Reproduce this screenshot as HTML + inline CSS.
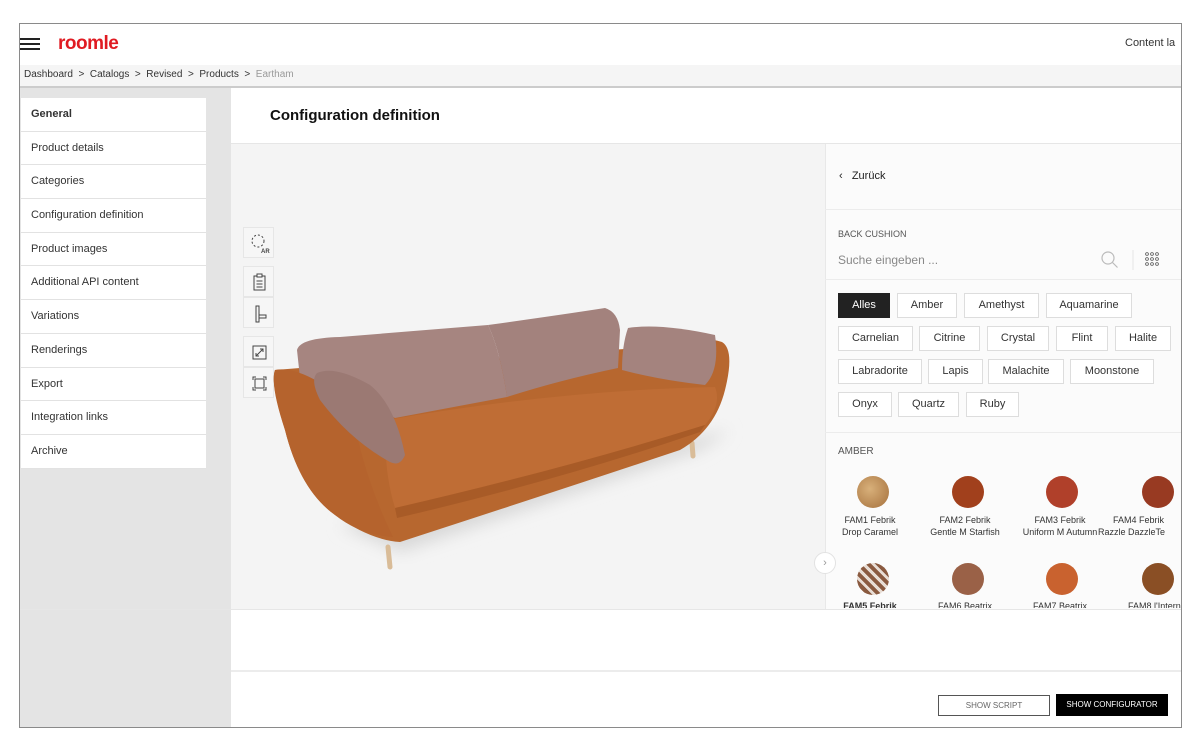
<!DOCTYPE html>
<html><head><meta charset="utf-8"><style>
*{box-sizing:border-box;margin:0;padding:0}
body{width:1200px;height:746px;background:#fff;font-family:"Liberation Sans",sans-serif;position:relative;overflow:hidden;color:#222}
.a{position:absolute}
.frame{left:19px;top:23px;width:1163px;height:705px;border:1px solid #8a8a8a;overflow:hidden}
.menu div{height:33.7px;border-bottom:1px solid #e2e2e2;font-size:11px;padding-left:10px;line-height:33px;color:#333;background:#fff}
.chip{position:absolute;height:25px;border:1px solid #ddd;background:#fff;font-size:11px;text-align:center;line-height:23px;color:#333}
.sw{position:absolute;width:32px;height:32px;border-radius:50%}
.lab{position:absolute;width:110px;text-align:center;font-size:9px;line-height:12px;color:#333}
.tb{position:absolute;left:243px;width:31px;height:31px;border:1px solid #e6e6e6;background:#f6f6f6}
</style></head><body>
<div class="a frame">
 <div class="a" style="left:0;top:14px;width:20px;height:2px;background:#222"></div>
 <div class="a" style="left:0;top:19px;width:20px;height:2px;background:#222"></div>
 <div class="a" style="left:0;top:24px;width:20px;height:2px;background:#222"></div>
 <div class="a" style="left:38px;top:9px;font-size:19px;color:#e01b22;font-weight:bold;letter-spacing:-0.5px">roomle</div>
 <div class="a" style="left:1105px;top:13px;font-size:11px;color:#333;white-space:nowrap">Content la</div>
 <div class="a" style="left:0;top:41px;width:1163px;height:23px;background:#f5f5f5;border-bottom:2px solid #ccc"></div>
 <div class="a" style="left:4px;top:45px;font-size:10px;color:#333;white-space:nowrap">Dashboard &nbsp;&gt;&nbsp; Catalogs &nbsp;&gt;&nbsp; Revised &nbsp;&gt;&nbsp; Products &nbsp;&gt;&nbsp; <span style="color:#999">Eartham</span></div>
 <div class="a" style="left:0;top:64px;width:211px;height:641px;background:#e4e4e4"></div>
 <div class="a menu" style="left:1px;top:74px;width:185px">
  <div style="font-weight:bold">General</div><div>Product details</div><div>Categories</div><div>Configuration definition</div><div>Product images</div><div>Additional API content</div><div>Variations</div><div>Renderings</div><div>Export</div><div>Integration links</div><div>Archive</div>
 </div>
 <div class="a" style="left:211px;top:64px;width:952px;height:56px;background:#fff;border-bottom:1px solid #e6e6e6"></div>
 <div class="a" style="left:250px;top:83px;font-size:15px;font-weight:bold;color:#111">Configuration definition</div>
 <div class="a" style="left:211px;top:120px;width:594px;height:465px;background:#f4f4f4"></div>
 <div class="a" style="left:805px;top:120px;width:358px;height:465px;background:#fbfbfb;border-left:1px solid #e8e8e8"></div>
 <div class="a" style="left:0;top:585px;width:1163px;height:1px;background:#e6e6e6"></div>
 <div class="a" style="left:211px;top:646px;width:952px;height:2px;background:#ececec"></div>
 <div class="a" style="left:918px;top:671px;width:112px;height:21px;border:1px solid #555;font-size:8px;color:#666;text-align:center;line-height:19px">SHOW SCRIPT</div>
 <div class="a" style="left:1036px;top:670px;width:112px;height:22px;background:#000;font-size:8px;color:#fff;text-align:center;line-height:22px">SHOW CONFIGURATOR</div>
</div>

<div class="tb" style="top:227px"><svg width="31" height="31"><circle cx="14" cy="13" r="6" fill="none" stroke="#444" stroke-dasharray="2 2"/><text x="17" y="25" font-size="6" font-weight="bold" fill="#444" font-family="Liberation Sans">AR</text></svg></div>
<div class="tb" style="top:266px"><svg width="31" height="31"><rect x="10" y="9" width="11" height="14" fill="none" stroke="#444"/><rect x="13" y="7" width="5" height="3" fill="#fff" stroke="#444"/><path d="M12.5 14h6M12.5 17h6M12.5 20h6" stroke="#444"/></svg></div>
<div class="tb" style="top:297px"><svg width="31" height="31"><rect x="12" y="8" width="3" height="16" fill="none" stroke="#444"/><rect x="15" y="17" width="7" height="3" fill="none" stroke="#444"/></svg></div>
<div class="tb" style="top:336px"><svg width="31" height="31"><rect x="9" y="9" width="13" height="13" fill="none" stroke="#444"/><path d="M12 19l7-7M12 16v3h3M16 12h3v3" fill="none" stroke="#444"/></svg></div>
<div class="tb" style="top:367px"><svg width="31" height="31"><path d="M9 12V9h3M19 9h3v3M22 19v3h-3M12 22H9v-3" fill="none" stroke="#444"/><rect x="11" y="11" width="9" height="9" fill="none" stroke="#444"/></svg></div>

<!-- sofa -->
<svg class="a" style="left:260px;top:290px" width="500" height="290" viewBox="0 0 500 290">
 <defs><filter id="b"><feGaussianBlur stdDeviation="8"/></filter></defs>
 <path d="M80 235 L140 262 L440 160 L470 140 L420 150 Z" fill="#d8d8d8" filter="url(#b)"/>
 <path d="M128 257l2 20M432 153l1 13M67 208l3 10" stroke="#d9bc98" stroke-width="5" stroke-linecap="round"/>
 <path d="M15 80 Q10 92 25 140 Q40 200 75 225 Q110 250 140 252 Q300 200 420 160 Q455 140 465 100 Q475 60 462 52 Q440 45 425 55 L200 70 L40 78 Z" fill="#b7672f"/>
 <path d="M37 60 Q40 48 80 47 L228 35 Q240 60 247 107 L135 128 Q80 100 40 88 Z" fill="#a68580"/>
 <path d="M228 35 Q300 25 345 18 Q358 22 360 40 L358 78 Q300 90 247 107 Q240 60 228 35Z" fill="#a3827d"/>
 <path d="M368 38 Q400 33 455 45 Q460 80 445 95 Q400 90 362 80 Q362 55 368 38Z" fill="#a4837e"/>
 <path d="M127 130 Q300 100 455 97 Q462 115 445 135 Q300 180 135 218 Q122 175 127 130 Z" fill="#bf6d35"/>
 <path d="M135 218 Q300 180 445 135 L440 142 Q300 190 137 228 Z" fill="#a85b27"/>
 <path d="M15 80 Q40 75 85 110 Q100 125 98 150 Q110 200 133 247 Q100 245 75 225 Q40 200 25 140 Q10 95 15 80Z" fill="#b5632d"/>
 <path d="M57 83 Q75 75 110 95 Q135 115 145 165 Q140 177 130 172 Q90 150 60 110 Q50 90 57 83Z" fill="#9b7973"/>
</svg>
<div class="a" style="left:814px;top:552px;width:22px;height:22px;border-radius:50%;background:#fff;border:1px solid #e2e2e2;font-size:11px;color:#999;text-align:center;line-height:20px">›</div>

<div class="a" style="left:839px;top:170px;font-size:11px;color:#222">‹&nbsp;&nbsp; Zurück</div>
<div class="a" style="left:825px;top:209px;width:356px;height:1px;background:#ececec"></div>
<div class="a" style="left:838px;top:229px;font-size:9px;color:#555">BACK CUSHION</div>
<div class="a" style="left:838px;top:253px;font-size:12px;color:#888">Suche eingeben ...</div>
<svg class="a" style="left:1100px;top:250px" width="80" height="20"><circle cx="8" cy="8" r="6" fill="none" stroke="#bbb" stroke-width="1.2"/><path d="M12.5 12.5l5 5" stroke="#bbb" stroke-width="1.2"/><path d="M33 0v20" stroke="#e6e6e6"/><g fill="none" stroke="#555" stroke-width="0.8"><circle cx="47" cy="4" r="1.4"/><circle cx="52" cy="4" r="1.4"/><circle cx="57" cy="4" r="1.4"/><circle cx="47" cy="9" r="1.4"/><circle cx="52" cy="9" r="1.4"/><circle cx="57" cy="9" r="1.4"/><circle cx="47" cy="14" r="1.4"/><circle cx="52" cy="14" r="1.4"/><circle cx="57" cy="14" r="1.4"/></g></svg>
<div class="a" style="left:825px;top:279px;width:356px;height:1px;background:#ececec"></div>
<div class="chip" style="left:838px;top:293px;width:52px;background:#222;color:#fff;border-color:#222">Alles</div>
<div class="chip" style="left:897px;top:293px;width:60px">Amber</div>
<div class="chip" style="left:964px;top:293px;width:75px">Amethyst</div>
<div class="chip" style="left:1046px;top:293px;width:86px">Aquamarine</div>
<div class="chip" style="left:838px;top:326px;width:75px">Carnelian</div>
<div class="chip" style="left:919px;top:326px;width:61px">Citrine</div>
<div class="chip" style="left:987px;top:326px;width:62px">Crystal</div>
<div class="chip" style="left:1056px;top:326px;width:52px">Flint</div>
<div class="chip" style="left:1115px;top:326px;width:56px">Halite</div>
<div class="chip" style="left:838px;top:359px;width:84px">Labradorite</div>
<div class="chip" style="left:928px;top:359px;width:55px">Lapis</div>
<div class="chip" style="left:988px;top:359px;width:76px">Malachite</div>
<div class="chip" style="left:1070px;top:359px;width:84px">Moonstone</div>
<div class="chip" style="left:838px;top:392px;width:54px">Onyx</div>
<div class="chip" style="left:898px;top:392px;width:61px">Quartz</div>
<div class="chip" style="left:966px;top:392px;width:53px">Ruby</div>
<div class="a" style="left:825px;top:432px;width:356px;height:1px;background:#ececec"></div>
<div class="a" style="left:838px;top:446px;font-size:10px;color:#555">AMBER</div>
<div class="sw" style="left:857px;top:476px;background:radial-gradient(circle at 40% 40%,#d8b07a,#a5703c)"></div>
<div class="sw" style="left:952px;top:476px;background:#a1401c"></div>
<div class="sw" style="left:1046px;top:476px;background:#b0402a"></div>
<div class="sw" style="left:1142px;top:476px;background:#983a22"></div>
<div class="lab" style="left:815px;top:514px">FAM1 Febrik<br>Drop Caramel</div>
<div class="lab" style="left:910px;top:514px">FAM2 Febrik<br>Gentle M Starfish</div>
<div class="lab" style="left:1005px;top:514px">FAM3 Febrik<br>Uniform M Autumn</div>
<div class="lab" style="left:1100px;top:514px;text-align:left;padding-left:13px;white-space:nowrap">FAM4 Febrik<br><span style="margin-left:-15px">Razzle DazzleTe</span></div>
<div class="sw" style="left:857px;top:563px;background:repeating-linear-gradient(45deg,#8a5a40 0 4px,#e8ddd5 4px 7px)"></div>
<div class="sw" style="left:952px;top:563px;background:#9a6147"></div>
<div class="sw" style="left:1046px;top:563px;background:#c9622f"></div>
<div class="sw" style="left:1142px;top:563px;background:#8a4f25"></div>
<div class="a" style="left:825px;top:600px;width:356px;height:8px;overflow:hidden">
 <div class="lab" style="left:-10px;top:0;font-weight:bold">FAM5 Febrik</div>
 <div class="lab" style="left:85px;top:0">FAM6 Beatrix</div>
 <div class="lab" style="left:180px;top:0">FAM7 Beatrix</div>
 <div class="lab" style="left:275px;top:0;text-align:left;padding-left:28px;white-space:nowrap">FAM8 l'Intern</div>
</div>
</body></html>
